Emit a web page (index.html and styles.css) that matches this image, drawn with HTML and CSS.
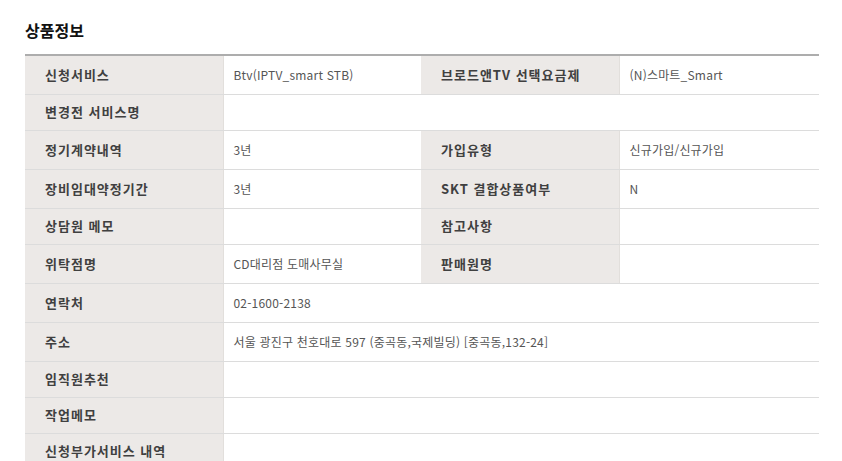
FILE: index.html
```html
<!DOCTYPE html>
<html lang="ko">
<head>
  <meta charset="UTF-8">
  <title>상품정보</title>
  <link rel="stylesheet" href="styles.css">
</head>
<body>
  <div class="wrap">
    <h2>상품정보</h2>
    <table class="info">
      <colgroup>
        <col class="c-th"><col class="c-td"><col class="c-th"><col class="c-td2">
      </colgroup>
      <tr>
        <th>신청서비스</th><td>Btv(IPTV_smart STB)</td>
        <th>브로드앤TV 선택요금제</th><td>(N)스마트_Smart</td>
      </tr>
      <tr>
        <th>변경전 서비스명</th><td colspan="3"></td>
      </tr>
      <tr>
        <th>정기계약내역</th><td>3년</td>
        <th>가입유형</th><td>신규가입/신규가입</td>
      </tr>
      <tr>
        <th>장비임대약정기간</th><td>3년</td>
        <th>SKT 결합상품여부</th><td>N</td>
      </tr>
      <tr>
        <th>상담원 메모</th><td></td>
        <th>참고사항</th><td></td>
      </tr>
      <tr>
        <th>위탁점명</th><td>CD대리점 도매사무실</td>
        <th>판매원명</th><td></td>
      </tr>
      <tr>
        <th>연락처</th><td colspan="3">02-1600-2138</td>
      </tr>
      <tr>
        <th>주소</th><td colspan="3">서울 광진구 천호대로 597 (중곡동,국제빌딩) [중곡동,132-24]</td>
      </tr>
      <tr>
        <th>임직원추천</th><td colspan="3"></td>
      </tr>
      <tr>
        <th>작업메모</th><td colspan="3"></td>
      </tr>
      <tr>
        <th>신청부가서비스 내역</th><td colspan="3"></td>
      </tr>
    </table>
  </div>
</body>
</html>
```

FILE: styles.css
```css
body {
  margin: 0;
  background-color: #fff;
  font-family: "Noto Sans CJK KR", "Liberation Sans", sans-serif;
}
.wrap {
  padding-left: 25px;
  width: 794px;
}
h2 {
  margin: 20px 0 14px;
  font-size: 16px;
  line-height: 20px;
  font-weight: bold;
  color: #111;
}
.info {
  width: 794px;
  border-collapse: collapse;
  table-layout: fixed;
  border-top: 2px solid #adadad;
}
.c-th {
  width: 198px;
}
.c-td {
  width: 198px;
}
.c-td2 {
  width: 200px;
}
.info th,
.info td {
  border-bottom: 1px solid #dcdcdc;
  text-align: left;
  vertical-align: middle;
}
.info th {
  background-color: #ece9e7;
  border-right: 1px solid #e2dfdc;
  padding: 9px 10px 11px 20px;
  font-size: 13px;
  line-height: 15px;
  font-weight: bold;
  letter-spacing: 1px;
  color: #404040;
}
.info td {
  padding: 10px;
  font-size: 12px;
  line-height: 18px;
  letter-spacing: 0.2px;
  color: #555;
}
```
